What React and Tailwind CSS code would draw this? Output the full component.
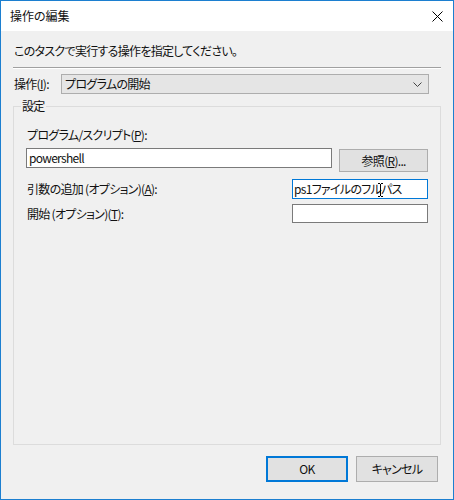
import React from 'react'

const font = { fontFamily: '"Noto Sans CJK JP", "Noto Sans", sans-serif' }

function CloseIcon() {
  return (
    <svg width="11" height="11" viewBox="0 0 11 11" className="block">
      <path d="M0.5 0.5 L10.5 10.5 M10.5 0.5 L0.5 10.5" stroke="#000" strokeWidth="1" fill="none" />
    </svg>
  )
}

function Chevron() {
  return (
    <svg width="9" height="5" viewBox="0 0 9 5" className="block">
      <path d="M0.5 0.5 L4.5 4.5 L8.5 0.5" stroke="#444" strokeWidth="1" fill="none" />
    </svg>
  )
}

// マウスカーソル (Iビーム)
function IBeam() {
  return (
    <span className="relative inline-block w-0 h-[14px] align-middle">
      <svg width="5" height="14" viewBox="0 0 5 14" className="absolute left-[-3px] top-[-1px]">
        <path d="M0 0.5 H2 M3 0.5 H5 M2.5 1 V13 M0 13.5 H2 M3 13.5 H5" stroke="#000" strokeWidth="1" fill="none" />
      </svg>
    </span>
  )
}

export default function App() {
  return (
    <div
      className="w-[454px] h-[500px] border border-[#1c7fd0] bg-[#f0f0f0] flex flex-col text-[12px] leading-[16px] tracking-[-0.7px] text-[#111] [font-feature-settings:'palt']"
      style={font}
    >
      {/* タイトルバー */}
      <div className="h-[30px] bg-white flex items-center justify-between pl-[9px] pr-[10px] shrink-0">
        <span className="tracking-[0px]">操作の編集</span>
        <CloseIcon />
      </div>

      <div className="flex-1 flex flex-col px-[12px]">
        <p className="mt-[12px] ml-[1px]">このタスクで実行する操作を指定してください。</p>

        <div className="mt-[8px] h-[2px] border-t border-[#a0a0a0] border-b border-b-white" />

        <div className="mt-[5px] flex items-center">
          <span className="w-[48px] pl-[1px]">操作(<u>I</u>):</span>
          <div className="w-[368px] h-[20px] bg-[#e5e5e5] border border-[#adadad] flex items-center justify-between pl-[3px] pr-[6px]">
            <span>プログラムの開始</span>
            <Chevron />
          </div>
        </div>

        <fieldset className="mt-[4px] flex-1 border border-[#dcdcdc] px-[12px] min-w-0">
          <legend className="ml-[-5px] px-[1px]">設定</legend>

          <p className="mt-[13px] ml-[1px]">プログラム/スクリプト(<u>P</u>):</p>

          <div className="mt-[5px] flex items-start">
            <div className="w-[307px] h-[20px] bg-white border border-[#7a7a7a] flex items-center pl-[2px]">
              powershell
            </div>
            <button className="ml-[7px] mt-[1px] w-[89px] h-[23px] bg-[#e1e1e1] border border-[#adadad] flex items-center justify-center">
              参照(<u>R</u>)...
            </button>
          </div>

          <div className="mt-[7px] flex items-center justify-between">
            <span className="ml-[1px]">引数の追加 (オプション)(<u>A</u>):</span>
            <div className="w-[136px] h-[20px] bg-white border border-[#0078d7] pl-[1px] leading-[18px] whitespace-nowrap">
              ps1ファイルのフル<IBeam />パス
            </div>
          </div>

          <div className="mt-[5px] flex items-center justify-between">
            <span className="ml-[1px]">開始 (オプション)(<u>T</u>):</span>
            <div className="w-[136px] h-[19px] bg-white border border-[#7a7a7a]" />
          </div>
        </fieldset>

        <div className="mt-[11px] mb-[17px] flex justify-end gap-[8px] pr-[3px]">
          <button className="w-[82px] h-[26px] bg-[#e1e1e1] border-2 border-[#0078d7] flex items-center justify-center">
            OK
          </button>
          <button className="w-[82px] h-[26px] bg-[#e1e1e1] border border-[#adadad] flex items-center justify-center">
            キャンセル
          </button>
        </div>
      </div>
    </div>
  )
}
